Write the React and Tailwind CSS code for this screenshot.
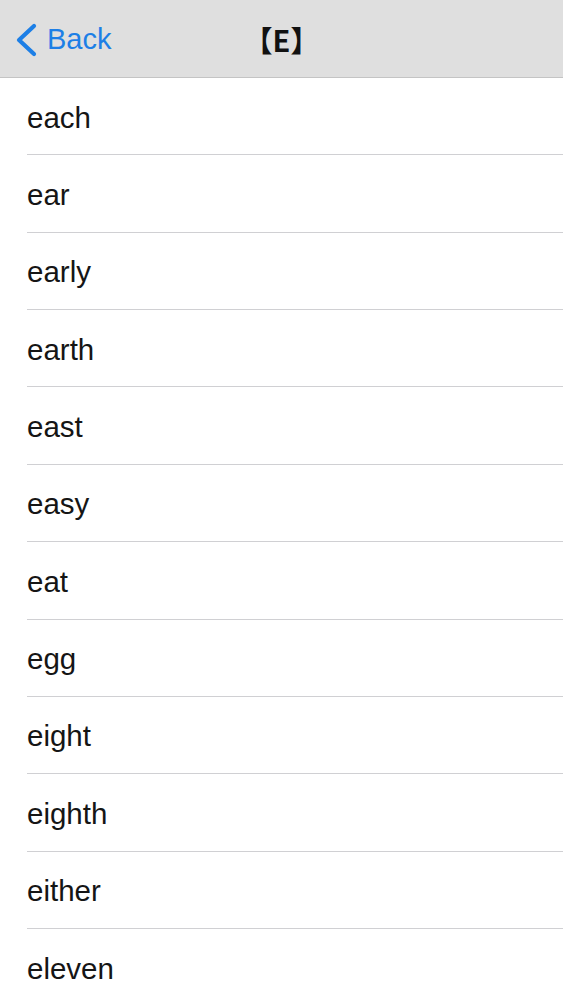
const words = [
  "each",
  "ear",
  "early",
  "earth",
  "east",
  "easy",
  "eat",
  "egg",
  "eight",
  "eighth",
  "either",
  "eleven",
];

function Header() {
  return (
    <div className="relative flex h-[78px] items-center border-b border-[#c4c4c4] bg-[#dfdfdf]">
      <button className="flex items-center gap-[9px] pl-[14px] pt-[2px] text-[#1d7fe6]">
        <svg width="24" height="34" viewBox="0 0 24 34" fill="none">
          <path
            d="M20 3 L5 17 L20 31"
            stroke="currentColor"
            strokeWidth="4.2"
            strokeLinecap="round"
            strokeLinejoin="round"
          />
        </svg>
        <span className="text-[29px] leading-none">Back</span>
      </button>
      <div className="absolute left-1/2 top-0 flex h-full -translate-x-1/2 items-center pt-[2px]">
        <span className="font-['Noto_Sans_CJK_SC',sans-serif] text-[29px] font-bold leading-none text-[#111]">
          【E】
        </span>
      </div>
    </div>
  );
}

export default function App() {
  return (
    <div className="h-[1000px] overflow-hidden bg-white font-['Liberation_Sans',Arial,sans-serif]">
      <Header />
      <ul>
        {words.map((w) => (
          <li key={w} className="pl-[27px]">
            <div className="flex h-[77.36px] items-center border-b border-[#d0d0d3] pt-[3px] text-[29.5px] text-[#151515]">
              {w}
            </div>
          </li>
        ))}
      </ul>
    </div>
  );
}
